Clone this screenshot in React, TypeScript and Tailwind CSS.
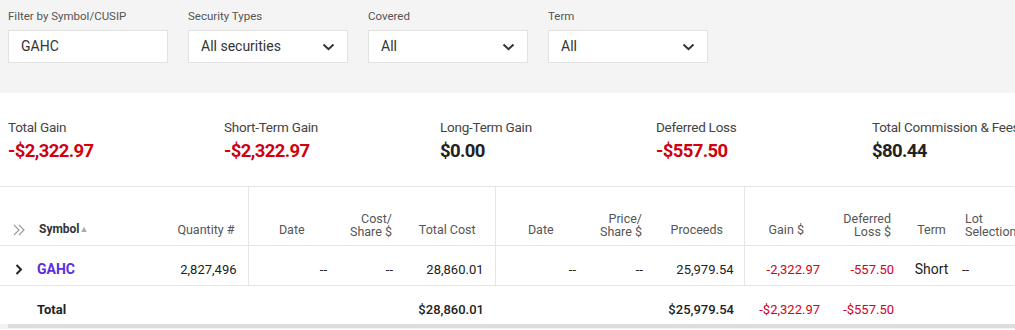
import React from "react";

const FONT = { fontFamily: "Roboto, 'Liberation Sans', Arial, sans-serif" };

function Chevron() {
  return (
    <svg width="13" height="8" viewBox="0 0 13 8" fill="none">
      <polyline points="1.5,1.5 6.5,6.2 11.5,1.5" stroke="#333" strokeWidth="2" />
    </svg>
  );
}

function SelectBox({ value }: { value: string }) {
  return (
    <div className="w-[160px] h-[33px] bg-white border border-[#e2e2e2] flex items-center justify-between pl-[12px] pr-[12px]">
      <span className="text-[14px] text-[#333]">{value}</span>
      <Chevron />
    </div>
  );
}

const summary = [
  { label: "Total Gain", value: "-$2,322.97", red: true },
  { label: "Short-Term Gain", value: "-$2,322.97", red: true },
  { label: "Long-Term Gain", value: "$0.00", red: false },
  { label: "Deferred Loss", value: "-$557.50", red: true },
  { label: "Total Commission & Fees", value: "$80.44", red: false },
];

export default function App() {
  return (
    <div className="w-[1015px] h-[330px] overflow-hidden bg-white text-[#222]" style={FONT}>
      {/* Filters */}
      <div className="bg-[#f4f4f4] h-[93px] px-[8px] pt-[9px] flex gap-[20px]">
        <div className="flex flex-col">
          <label className="text-[11.5px] text-[#555] leading-[14px] mb-[7px]">Filter by Symbol/CUSIP</label>
          <div className="w-[160px] h-[33px] bg-white border border-[#e2e2e2] flex items-center pl-[12px] text-[14px] text-[#333]">
            GAHC
          </div>
        </div>
        <div className="flex flex-col">
          <label className="text-[11.5px] text-[#555] leading-[14px] mb-[7px]">Security Types</label>
          <SelectBox value="All securities" />
        </div>
        <div className="flex flex-col">
          <label className="text-[11.5px] text-[#555] leading-[14px] mb-[7px]">Covered</label>
          <SelectBox value="All" />
        </div>
        <div className="flex flex-col">
          <label className="text-[11.5px] text-[#555] leading-[14px] mb-[7px]">Term</label>
          <SelectBox value="All" />
        </div>
      </div>

      {/* Summary */}
      <div className="h-[94px] flex pl-[8px] pt-[26px] border-b border-[#e5e5e5] whitespace-nowrap">
        {summary.map((s) => (
          <div key={s.label} className="w-[216px] shrink-0">
            <div className="text-[13.5px] leading-[16px] tracking-[-0.25px] text-[#444]">{s.label}</div>
            <div
              className={`text-[18.5px] leading-[24px] tracking-[-0.6px] font-bold mt-[4px] ${
                s.red ? "text-[#d0000d]" : "text-[#222]"
              }`}
            >
              {s.value}
            </div>
          </div>
        ))}
      </div>

      {/* Table */}
      <div className="w-[1015px] overflow-hidden">
        <table className="table-fixed border-collapse w-[1080px] whitespace-nowrap">
          <colgroup>
            <col className="w-[30px]" />
            <col className="w-[100px]" />
            <col className="w-[118px]" />
            <col className="w-[87px]" />
            <col className="w-[65px]" />
            <col className="w-[95px]" />
            <col className="w-[91px]" />
            <col className="w-[64px]" />
            <col className="w-[94px]" />
            <col className="w-[84px]" />
            <col className="w-[75px]" />
            <col className="w-[57px]" />
            <col className="w-[120px]" />
          </colgroup>
          <thead>
            <tr className="h-[58px] border-b border-[#e5e5e5] text-[12.5px] leading-[13px] text-[#555] font-normal">
              <th className="pl-[13px] pb-[9px] text-left align-bottom">
                <svg width="13" height="12" viewBox="0 0 13 12" fill="none">
                  <polyline points="1,1 6,6 1,11" stroke="#999" strokeWidth="1.1" />
                  <polyline points="6,1 11,6 6,11" stroke="#999" strokeWidth="1.1" />
                </svg>
              </th>
              <th className="pl-[9px] pb-[9px] align-bottom text-left font-bold text-[#333] text-[12px]">
                Symbol
                <span className="text-[9px] text-[#aaa] align-[1px]">▲</span>
              </th>
              <th className="pr-[13px] pb-[9px] align-bottom text-right font-normal border-r border-[#e5e5e5]">Quantity #</th>
              <th className="pb-[9px] align-bottom text-center font-normal">Date</th>
              <th className="pr-[8px] pb-[7px] align-bottom text-right font-normal">
                Cost/
                <br />
                Share $
              </th>
              <th className="pb-[9px] align-bottom text-center font-normal border-r border-[#e5e5e5]">Total Cost</th>
              <th className="pb-[9px] align-bottom text-center font-normal">Date</th>
              <th className="pr-[8px] pb-[7px] align-bottom text-right font-normal">
                Price/
                <br />
                Share $
              </th>
              <th className="pb-[9px] align-bottom text-center font-normal border-r border-[#e5e5e5]">Proceeds</th>
              <th className="pb-[9px] align-bottom text-center font-normal">Gain $</th>
              <th className="pr-[12px] pb-[7px] align-bottom text-right font-normal">
                Deferred
                <br />
                Loss $
              </th>
              <th className="pb-[9px] align-bottom text-center font-normal">Term</th>
              <th className="pl-[5px] pb-[7px] align-bottom text-left font-normal">
                Lot
                <br />
                Selection
              </th>
            </tr>
          </thead>
          <tbody className="text-[13px]">
            <tr className="h-[40px] border-b border-[#e5e5e5] text-[#222] [&>td]:pt-[9px]">
              <td className="pl-[15px]">
                <svg width="8" height="11" viewBox="0 0 8 11" fill="none">
                  <polyline points="1.5,1 6,5.5 1.5,10" stroke="#222" strokeWidth="2" />
                </svg>
              </td>
              <td className="pl-[7px] font-bold text-[14px] text-[#5b2ee0]">GAHC</td>
              <td className="pr-[11px] text-right border-r border-[#e5e5e5]">2,827,496</td>
              <td className="pr-[8px] text-right">--</td>
              <td className="pr-[7px] text-right">--</td>
              <td className="pr-[11px] text-right border-r border-[#e5e5e5]">28,860.01</td>
              <td className="pr-[10px] text-right">--</td>
              <td className="pr-[7px] text-right">--</td>
              <td className="pr-[10px] text-right border-r border-[#e5e5e5]">25,979.54</td>
              <td className="pr-[8px] text-right text-[#d0021b]">-2,322.97</td>
              <td className="pr-[9px] text-right text-[#d0021b]">-557.50</td>
              <td className="text-center text-[14px]">Short</td>
              <td className="pl-[2px]">--</td>
            </tr>
            <tr className="h-[39px] text-[#222] [&>td]:pt-[10px]">
              <td />
              <td className="pl-[7px] font-bold">Total</td>
              <td />
              <td />
              <td />
              <td className="pr-[11px] text-right font-medium">$28,860.01</td>
              <td />
              <td />
              <td className="pr-[10px] text-right font-medium">$25,979.54</td>
              <td className="pr-[8px] text-right text-[#d0021b]">-$2,322.97</td>
              <td className="pr-[9px] text-right text-[#d0021b]">-$557.50</td>
              <td />
              <td />
            </tr>
          </tbody>
        </table>
        {/* horizontal scroll track */}
        <div className="h-[5px] bg-[#f2f2f2] pl-[8px]">
          <div className="h-[4px] bg-[#dcdcdc] w-full" />
        </div>
      </div>
    </div>
  );
}
